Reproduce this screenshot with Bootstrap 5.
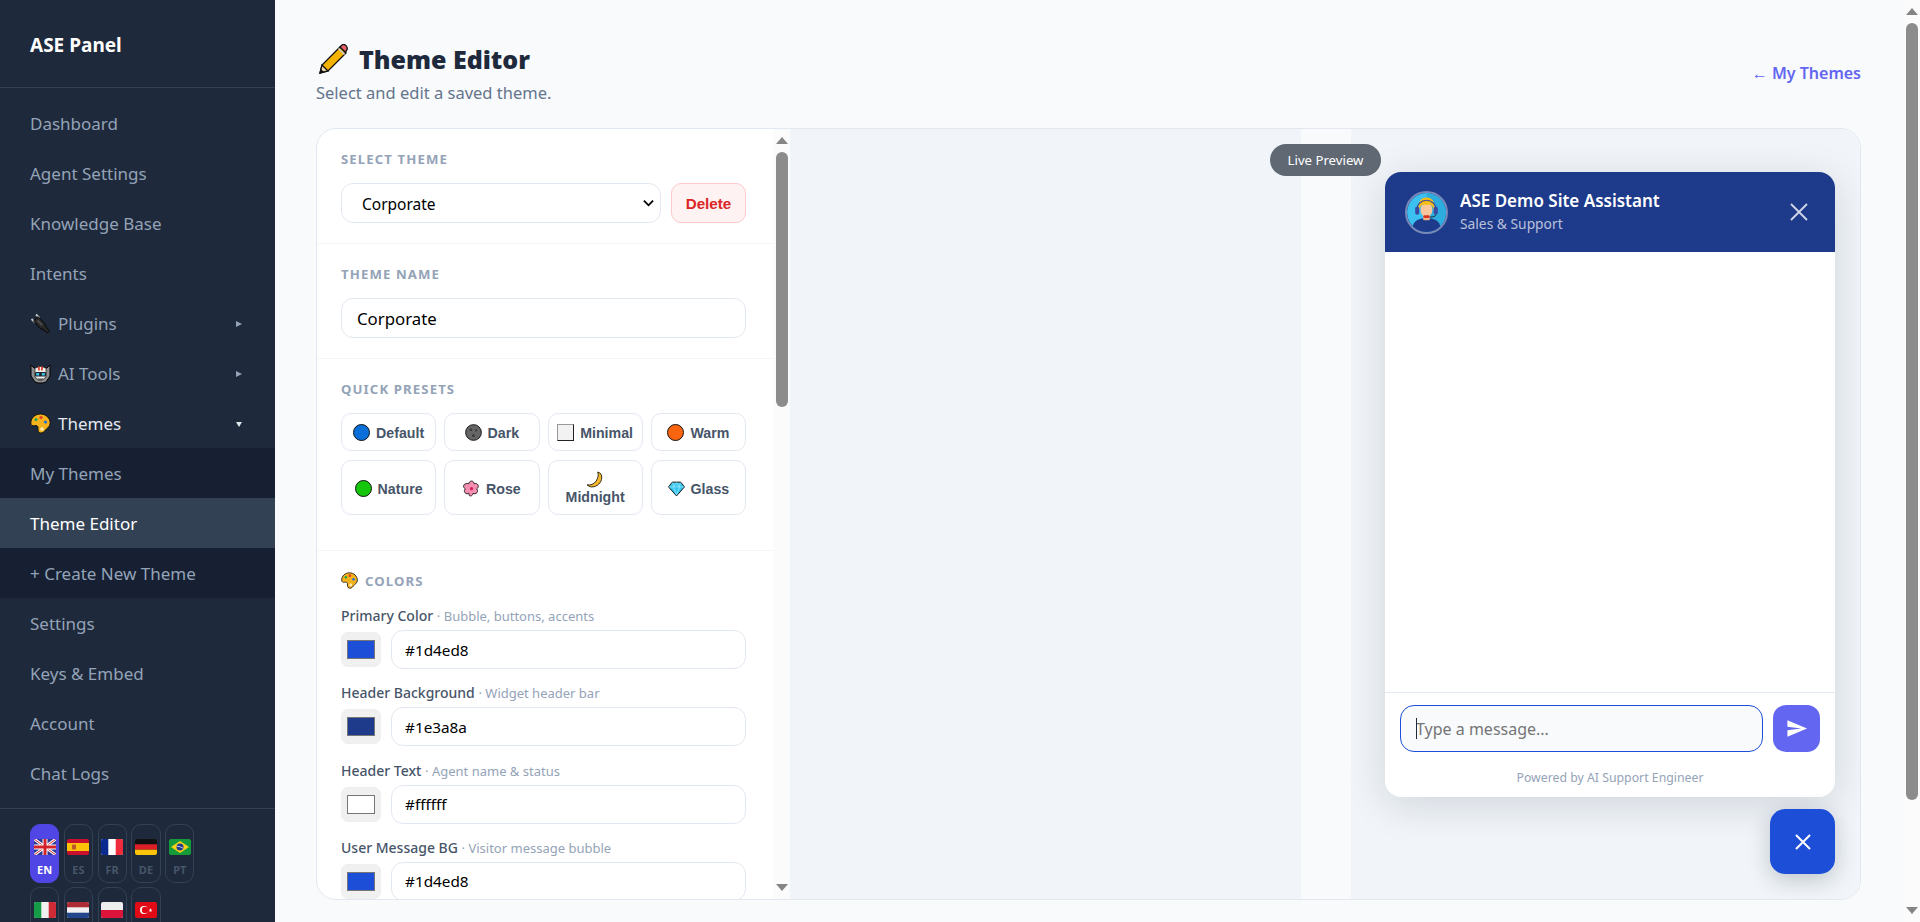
<!DOCTYPE html>
<html lang="en">
<head>
  <meta charset="UTF-8" />
  <meta name="viewport" content="width=device-width, initial-scale=1.0"/>
  <title>Theme Editor - ASE Panel</title>
  <link href="https://cdn.jsdelivr.net/npm/bootstrap@5.3.0/dist/css/bootstrap.min.css" rel="stylesheet"/>
  <style>
    html, body { height: 100%; overflow: hidden; }
    body {
      font-family: "Noto Sans", "Open Sans", sans-serif;
      background: #f8fafc;
      color: #1e293b;
    }

    /* classic scrollbars */
    .scroll-bar { width: 17px; flex: 0 0 17px; padding: 8px 0; background: #fbfbfc; }
    .scroll-up { width: 0; height: 0; border: solid transparent; border-width: 0 6.5px 7px; border-bottom-color: #858585; }
    .scroll-down { width: 0; height: 0; border: solid transparent; border-width: 7px 6.5px 0; border-top-color: #858585; margin-top: auto; }
    .scroll-thumb { width: 12px; margin-top: 8px; background: #8c8c8c; border-radius: 6px; }
    .thumb-page { height: 777px; }
    .thumb-pane { height: 255px; }

    /* sidebar */
    .sidebar { width: 275px; flex: 0 0 275px; background: #1e293b; overflow: hidden; }
    .brand { height: 88px; flex-shrink: 0; padding: 34px 30px 0; font-size: 19px; font-weight: 700; color: #fff; line-height: 22px; border-bottom: 1px solid #334155; }
    .side-nav { flex-shrink: 0; padding: 10px 0; border-bottom: 1px solid #334155; }
    .side-link {
      height: 50px;
      padding: 1px 30px 0;
      font-size: 17px;
      color: #94a3b8;
      text-decoration: none;
    }
    .side-link svg.emoji { width: 21px; height: 21px; margin-right: 7px; }
    .side-link .caret { width: 6px; height: 6px; margin-left: auto; margin-right: 3px; fill: #94a3b8; }
    .side-link.open { color: #e2e8f0; }
    .side-link.open .caret { fill: #e2e8f0; }
    .sub-link { background: #162032; }
    .sub-link.active { background: #334155; color: #fff; }
    .lang-list { flex-shrink: 0; padding: 15px 70px 0 30px; gap: 4px 4.6px; }
    .lang-btn {
      width: 29.2px;
      height: 59px;
      padding-top: 14px;
      border: 1px solid #334155;
      border-radius: 10px;
      font-size: 11px;
      font-weight: 700;
      line-height: 16px;
      color: #475569;
    }
    .lang-btn svg { width: 22px; height: 16px; border-radius: 2px; margin-bottom: 7px; }
    .lang-btn.active { background: #4f46e5; border-color: #4f46e5; color: #fff; }

    /* page */
    .main-area { overflow: hidden; min-width: 0; padding: 41px 42px 0 41px; }
    .page-head { margin-bottom: 23px; }
    .page-title { font-size: 25px; line-height: 36px; font-weight: 900; color: #1e293b; margin: 0; }
    .page-title svg { width: 31px; height: 31px; margin: 0 10px 0 2px; }
    .page-sub { font-size: 16.5px; line-height: 24px; color: #64748b; margin: 4px 0 0; }
    .back-link { font-size: 16px; font-weight: 600; color: #6366f1; text-decoration: none; }

    .editor { height: 772px; background: #fff; border: 1px solid #e2e8f0; border-radius: 20px; overflow: hidden; }
    .pane-form { width: 473px; flex: 0 0 473px; }
    .form-scroll { overflow: hidden; min-width: 0; }
    .form-block { padding: 20px 27px 20px 24px; border-bottom: 1px solid #f1f5f9; }
    .block-title {
      font-size: 13.2px;
      line-height: 20px;
      font-weight: 700;
      letter-spacing: 1.1px;
      text-transform: uppercase;
      color: #94a3b8;
      margin-bottom: 14px;
    }
    .block-title svg { width: 17px; height: 17px; margin-right: 7px; vertical-align: -3px; }
    .colors-title { margin-bottom: 15px; }
    .field, .form-select.field {
      height: 40px;
      border: 1px solid #e2e8f0;
      border-radius: 12px;
      color: #000;
      font-size: 15.5px;
    }
    .theme-select {
      padding: 3px 24px 0 20px;
      background-image: url("data:image/svg+xml,%3csvg xmlns='http://www.w3.org/2000/svg' viewBox='0 0 12 8'%3e%3cpath fill='none' stroke='%23000' stroke-width='2' d='M1 1.500l5 5 5-5'/%3e%3c/svg%3e");
      background-size: 11px 8px;
      background-position: right 6px center;
    }
    .name-input { padding: 0 15px; font-size: 16.8px; }
    .theme-row { gap: 10px; }
    .btn-del {
      width: 75px;
      height: 40px;
      padding: 0;
      background: #fef2f2;
      border: 1px solid #fecaca;
      border-radius: 10px;
      font: 700 15.2px "Liberation Sans", Arial, sans-serif;
      color: #dc2626;
    }
    .preset-grid { display: grid; grid-template-columns: repeat(4, 1fr); gap: 9px 8px; margin-bottom: 15px; }
    .preset {
      padding: 10px 8px 8px;
      background: #fff;
      border: 1px solid #e2e8f0;
      border-radius: 10px;
      font: 700 14.2px/17px "Liberation Sans", Arial, sans-serif;
      color: #475569;
    }
    .preset svg { width: 17px; height: 17px; margin-right: 2px; vertical-align: -3px; }
    .preset .dot { display: inline-block; width: 17px; height: 17px; margin-right: 2px; border: 1px solid #111; border-radius: 50%; vertical-align: -3px; }
    .preset .box { display: inline-block; width: 17px; height: 17px; margin-right: 2px; border: 1px solid #222; border-top-color: #999; border-left-color: #999; background: #f2f2f2; vertical-align: -3px; }
    .colour-row { margin-bottom: 14.3px; }
    .colour-label { font-size: 14px; line-height: 20px; font-weight: 500; color: #475569; margin-bottom: 4px; }
    .colour-label small { font-size: 13px; font-weight: 400; color: #94a3b8; }
    .colour-pick {
      width: 40px;
      height: 35px;
      padding: 7px 5px;
      background: #f0f0f0;
      border: 1px solid #eee;
      border-radius: 7px;
      flex: 0 0 40px;
    }
    .colour-pick::-webkit-color-swatch-wrapper { padding: 0; }
    .colour-pick::-webkit-color-swatch { border: 1px solid #767676; border-radius: 0; }
    .colour-input { height: 39px; padding: 0 13px; font-size: 15.3px; }
    .colour-gap { gap: 10px; }

    /* live preview */
    .pane-preview { background: #f1f5f9; min-width: 0; }
    .band-gap { width: 511px; flex: 0 0 511px; }
    .band { width: 50px; flex: 0 0 50px; background: #f8fafc; }
    .stage { padding: 43px 25px 0 34px; min-width: 0; }
    .live-badge {
      position: absolute;
      top: 15px;
      left: 480px;
      width: 111px;
      height: 32px;
      padding-top: 1px;
      background: #5f6873;
      border-radius: 16px;
      font-size: 13.2px;
      color: #fff;
      z-index: 2;
    }
    .widget { width: 450px; height: 625px; flex-shrink: 0; background: #fff; border-radius: 16px; overflow: hidden; box-shadow: 0 8px 40px rgba(15, 23, 42, .14); }
    .widget-head { height: 80px; padding: 0 26px 0 20px; background: #1e3a8a; color: #fff; }
    .widget-head .avatar { width: 43px; height: 43px; margin-right: 12px; border-radius: 50%; border: 2px solid rgba(255, 255, 255, .4); flex: 0 0 43px; }
    .widget-name { font-size: 17px; line-height: 22px; font-weight: 600; margin-bottom: 2px; }
    .widget-status { font-size: 13.8px; line-height: 20px; color: rgba(255, 255, 255, .7); }
    .widget-head .close-x { width: 20px; height: 20px; margin-left: auto; stroke: rgba(255, 255, 255, .8); }
    .widget-body { min-height: 0; }
    .widget-foot { padding: 12px 15px 0; border-top: 1px solid #e2e8f0; height: 105px; }
    .msg-input {
      width: 363px;
      height: 47px;
      padding: 0 15px;
      background: #f8fafc;
      border: 1px solid #1d4ed8;
      border-radius: 14px;
      font-size: 16px;
    }
    .msg-input::placeholder { color: #757575; }
    .msg-wrap { position: relative; }
    .msg-caret { position: absolute; left: 16px; top: 13px; width: 1px; height: 21px; background: #1e293b; }
    .send-btn { width: 47px; height: 47px; padding: 0; background: #6366f1; border: 0; border-radius: 13px; }
    .send-btn svg { width: 23px; height: 23px; fill: #fff; }
    .powered { margin-top: 17px; font-size: 12.3px; line-height: 18px; color: #94a3b8; text-align: center; }
    .fab { width: 65px; height: 65px; flex-shrink: 0; margin-top: 12px; padding: 0; background: #1d4ed8; border: 0; border-radius: 15px; box-shadow: 0 6px 22px rgba(15, 23, 42, .22); }
    .fab svg { width: 18px; height: 18px; stroke: #fff; }
  </style>
</head>
<body class="d-flex">
  <svg width="0" height="0" class="position-absolute">
    <defs>
      <symbol id="e-plug" viewBox="0 0 21 21">
        <path d="M1.500 6 5 9.500M6 1.500 9.500 5" stroke="#c8c8c8" stroke-width="1.800"/>
        <path d="M3.500 8 8 3.500l7 7 1 3 3.500 4.500-2 2-4.500-3.500-3-1z" fill="#262626" stroke="#000" stroke-width=".8"/>
        <path d="M6.500 8 8 6.500l5 5-1.500 1.500z" fill="#4a4a4a"/>
      </symbol>
      <symbol id="e-robot" viewBox="0 0 21 21">
        <path d="M1 2l3 3h13l3-3v11l-4 6-3 1H8l-3-1-4-6z" fill="#8c8c8c" stroke="#000"/>
        <path d="M5 5q5.500-3 11 0v9q-5.500 6-11 0z" fill="#f0f0f0" stroke="#000" stroke-width=".6"/>
        <rect x="8" y="3.500" width="1.800" height="4" fill="#d8452e"/>
        <rect x="11" y="3.500" width="1.800" height="4" fill="#d8452e"/>
        <rect x="5" y="9" width="11" height="4.500" rx="1" fill="#222"/>
        <rect x="6.200" y="10" width="3" height="2.500" fill="#38c6f0"/>
        <rect x="11.800" y="10" width="3" height="2.500" fill="#38c6f0"/>
        <rect x="8" y="15.500" width="5" height="2" fill="#555"/>
      </symbol>
      <symbol id="e-palette" viewBox="0 0 21 21">
        <path d="M10.500 1C5 1 .8 5 .8 10c0 2.500 2 3.200 3.700 2.700 2-.6 3.600.2 3.500 2-.1 1.500-.3 5.300 2.800 5.300 2.300 0 3-1 4.200-2.500 1.400-1.700 5.200-3.500 5.200-7.500 0-5-4.500-9-9.700-9z" fill="#f5b21c" stroke="#111"/>
        <circle cx="6" cy="6.500" r="1.500" fill="#1ea34a"/>
        <circle cx="11" cy="4.500" r="1.600" fill="#e23b2e"/>
        <circle cx="15.500" cy="9" r="1.600" fill="#1f6fe0"/>
        <circle cx="12" cy="16" r="1.800" fill="#fbeeb9"/>
      </symbol>
      <symbol id="e-pencil" viewBox="0 0 31 31">
        <path d="M2 29l2-8L22 3l6 6L10 27z" fill="#f5b301" stroke="#111" stroke-width="1.300"/>
        <path d="M22 3l2-2c1-1 3-.5 4 .7s1.800 3 .8 4L27.500 8.500z" fill="#e8606a" stroke="#111" stroke-width="1.300"/>
        <path d="M20.500 4.500l6 6" stroke="#ccc" stroke-width="1.600"/>
        <path d="M2 29l2-8 6 6z" fill="#f3d9b1" stroke="#111" stroke-width="1.300"/>
        <path d="M2 29l1-4 3 3z" fill="#111"/>
      </symbol>
      <symbol id="e-moon" viewBox="0 0 16 16">
        <path d="M11 1c3 .5 4 3 3.800 5.500C14.500 11 10.500 15 5.500 15 3.500 15 2 14 1 13c3 .7 6.500-.5 8.500-3.500C11.500 6.500 12 3.500 11 1z" fill="#f5b82e" stroke="#111" stroke-width=".8"/>
      </symbol>
      <symbol id="e-rose" viewBox="0 0 16 16">
        <path d="M8 1c1.500 0 2.500 1.300 2.500 2.500 1.300-.6 3-.2 3.700 1.300.7 1.500-.2 3-1.400 3.500 1 .9 1.300 2.500.3 3.700-1 1.200-2.600 1.200-3.700.5 0 1.300-1 2.500-2.400 2.500S5.600 13.800 5.600 12.500c-1.100.7-2.700.7-3.700-.5-1-1.200-.7-2.800.3-3.700C1 7.800.1 6.300.8 4.800S4.200 2.900 5.500 3.500C5.500 2.300 6.500 1 8 1z" fill="#f48fb1" stroke="#111" stroke-width=".8"/>
        <circle cx="8" cy="8.200" r="1.500" fill="#d81b60"/>
      </symbol>
      <symbol id="e-gem" viewBox="0 0 16 16">
        <path d="M4 2h8l3.500 4.500L8 15 .5 6.500z" fill="#38c6f0" stroke="#111" stroke-width=".9"/>
        <path d="M1 6.500h14M5 6.500 8 14l3-7.500M4.500 2.500 5.500 6.500 8 2.500l2.500 4 1-4" fill="none" stroke="#a6ecfb" stroke-width=".6"/>
      </symbol>
      <symbol id="e-moonball" viewBox="0 0 16 16">
        <circle cx="8" cy="8" r="7.400" fill="#666" stroke="#111" stroke-width=".9"/>
        <circle cx="5.500" cy="5.500" r="1.300" fill="#3c3c3c"/>
        <circle cx="10.500" cy="6" r="1" fill="#3c3c3c"/>
        <circle cx="8" cy="11" r="1.400" fill="#3c3c3c"/>
      </symbol>
    </defs>
  </svg>

  <aside class="sidebar d-flex flex-column">
    <div class="brand">ASE Panel</div>
    <nav class="side-nav d-flex flex-column" id="sideNav"></nav>
    <div class="lang-list d-flex flex-wrap" id="langList"></div>
  </aside>

  <main class="main-area flex-grow-1">
    <div class="page-head d-flex justify-content-between align-items-center">
      <div>
        <h1 class="page-title d-flex align-items-center"><svg><use href="#e-pencil"/></svg>Theme Editor</h1>
        <p class="page-sub">Select and edit a saved theme.</p>
      </div>
      <a href="#" class="back-link">← My Themes</a>
    </div>

    <div class="editor d-flex">
      <section class="pane-form d-flex">
        <div class="form-scroll flex-grow-1">
          <div class="form-block">
            <div class="block-title">Select theme</div>
            <div class="theme-row d-flex">
              <select class="form-select field theme-select flex-grow-1"><option>Corporate</option></select>
              <button class="btn-del flex-shrink-0" type="button">Delete</button>
            </div>
          </div>
          <div class="form-block">
            <div class="block-title">Theme name</div>
            <input class="form-control field name-input" value="Corporate">
          </div>
          <div class="form-block">
            <div class="block-title">Quick presets</div>
            <div class="preset-grid" id="presetGrid"></div>
          </div>
          <div class="form-block border-0">
            <div class="block-title colors-title"><svg><use href="#e-palette"/></svg>Colors</div>
            <div id="colourRows"></div>
          </div>
        </div>
        <div class="scroll-bar d-flex flex-column align-items-center">
          <span class="scroll-up"></span>
          <span class="scroll-thumb thumb-pane"></span>
          <span class="scroll-down"></span>
        </div>
      </section>

      <section class="pane-preview flex-grow-1 d-flex position-relative">
        <div class="live-badge d-flex align-items-center justify-content-center">Live Preview</div>
        <div class="band-gap"></div>
        <div class="band"></div>
        <div class="stage flex-grow-1 d-flex flex-column align-items-end">
          <div class="widget d-flex flex-column">
            <div class="widget-head d-flex align-items-center flex-shrink-0">
              <svg class="avatar" viewBox="0 0 43 43">
                <circle cx="21.500" cy="21.500" r="21.500" fill="#3cc0f0"/>
                <path d="M21.500 0a21.500 21.500 0 0 1 0 43z" fill="#2cacdf"/>
                <path d="M6 38c1-7 6-9 10-10h11c4 1 9 3 10 10a21.500 21.500 0 0 1-31 0z" fill="#1e3a8a"/>
                <rect x="18" y="23" width="7" height="7" fill="#f2b488"/>
                <ellipse cx="21.500" cy="18.500" rx="6.500" ry="8" fill="#f8c69c"/>
                <path d="M13 20C11 9 16 5 21.500 5S32 9 30 20c-.5-3-2-6-4-7h-9c-2 1-3.500 4-4 7z" fill="#f7bd14"/>
                <path d="M11 20C10 4 33 4 32 20" fill="none" stroke="#3b4aa0" stroke-width="1.300"/>
                <rect x="9" y="15" width="4.500" height="9" rx="2.200" fill="#3b4aa0"/>
                <rect x="29.500" y="15" width="4.500" height="9" rx="2.200" fill="#3b4aa0"/>
                <path d="M32 24c-1 2-3 2.500-7 2.500" fill="none" stroke="#222" stroke-width="1"/>
                <rect x="18" y="24.500" width="7" height="3" rx="1.500" fill="#d7301f"/>
              </svg>
              <div>
                <div class="widget-name">ASE Demo Site Assistant</div>
                <div class="widget-status">Sales &amp; Support</div>
              </div>
              <svg class="close-x" viewBox="0 0 20 20" fill="none" stroke-width="1.800"><path d="M2 2l16 16M18 2 2 18"/></svg>
            </div>
            <div class="widget-body flex-grow-1"></div>
            <div class="widget-foot flex-shrink-0">
              <div class="d-flex gap-2 justify-content-between">
                <div class="msg-wrap">
                  <input class="form-control msg-input" placeholder="Type a message...">
                  <span class="msg-caret"></span>
                </div>
                <button class="send-btn d-flex align-items-center justify-content-center" type="button">
                  <svg viewBox="0 0 24 24"><path d="M2.500 20.500 23 12 2.500 3.500v6.600L17 12 2.500 13.900z"/></svg>
                </button>
              </div>
              <div class="powered">Powered by AI Support Engineer</div>
            </div>
          </div>
          <button class="fab d-flex align-items-center justify-content-center" type="button">
            <svg viewBox="0 0 18 18" fill="none" stroke-width="2"><path d="M2 2l14 14M16 2 2 16"/></svg>
          </button>
        </div>
      </section>
    </div>
  </main>

  <div class="scroll-bar d-flex flex-column align-items-center">
    <span class="scroll-up"></span>
    <span class="scroll-thumb thumb-page"></span>
    <span class="scroll-down"></span>
  </div>

  <script src="https://cdn.jsdelivr.net/npm/bootstrap@5.3.0/dist/js/bootstrap.bundle.min.js"></script>
  <script>
    const caretRight = '<svg class="caret" viewBox="0 0 6 6"><path d="M0 0l6 3-6 3z"/></svg>';
    const caretDown = '<svg class="caret" viewBox="0 0 6 6"><path d="M0 1h6L3 6z"/></svg>';

    const navItems = [
      { text: "Dashboard" },
      { text: "Agent Settings" },
      { text: "Knowledge Base" },
      { text: "Intents" },
      { text: "Plugins", icon: "e-plug", caret: caretRight },
      { text: "AI Tools", icon: "e-robot", caret: caretRight },
      { text: "Themes", icon: "e-palette", caret: caretDown, cls: "open" },
      { text: "My Themes", cls: "sub-link" },
      { text: "Theme Editor", cls: "sub-link active" },
      { text: "+ Create New Theme", cls: "sub-link" },
      { text: "Settings" },
      { text: "Keys & Embed" },
      { text: "Account" },
      { text: "Chat Logs" }
    ];

    document.getElementById("sideNav").innerHTML = navItems.map(item => `
      <a href="#" class="side-link d-flex align-items-center ${item.cls || ''}">
        ${item.icon ? `<svg class="emoji"><use href="#${item.icon}"/></svg>` : ''}
        <span>${item.text.replace('&', '&amp;')}</span>
        ${item.caret || ''}
      </a>`).join('');

    const flags = {
      EN: '<rect width="22" height="16" fill="#2b3990"/><path d="M0 0l22 16M22 0 0 16" stroke="#fff" stroke-width="3"/><path d="M0 0l22 16M22 0 0 16" stroke="#d2232a" stroke-width="1"/><path d="M11 0v16M0 8h22" stroke="#fff" stroke-width="5"/><path d="M11 0v16M0 8h22" stroke="#d2232a" stroke-width="3"/>',
      ES: '<rect width="22" height="16" fill="#c8102e"/><rect y="4" width="22" height="8" fill="#fcc30b"/><rect x="5" y="5.500" width="4" height="5" rx="1" fill="#c0562b"/>',
      FR: '<rect width="22" height="16" fill="#fff"/><rect width="7.300" height="16" fill="#0b2a8f"/><rect x="14.700" width="7.300" height="16" fill="#ef2b3c"/>',
      DE: '<rect width="22" height="16" fill="#111"/><rect y="5.300" width="22" height="5.400" fill="#dd1f26"/><rect y="10.700" width="22" height="5.300" fill="#fcc30b"/>',
      PT: '<rect width="22" height="16" fill="#169b3a"/><path d="M11 2 20 8 11 14 2 8z" fill="#fcd116"/><circle cx="11" cy="8" r="3.500" fill="#1e3a8a"/><path d="M7.800 7.200q3.500 0 6.200 2" stroke="#fff" stroke-width=".7" fill="none"/>',
      IT: '<rect width="22" height="16" fill="#f1f1f1"/><rect width="7.300" height="16" fill="#169b46"/><rect x="14.700" width="7.300" height="16" fill="#ce2b37"/>',
      NL: '<rect width="22" height="16" fill="#f1f1f1"/><rect width="22" height="5.300" fill="#ad2b34"/><rect y="10.700" width="22" height="5.300" fill="#21468b"/>',
      PL: '<rect width="22" height="16" fill="#eeeeee"/><rect y="8" width="22" height="8" fill="#dc143c"/>',
      TR: '<rect width="22" height="16" fill="#e30a17"/><circle cx="9" cy="8" r="4" fill="#fff"/><circle cx="10" cy="8" r="3.200" fill="#e30a17"/><path d="M15.500 6.300l.5 1.300 1.300.1-1 .9.300 1.300-1.100-.7-1.100.7.300-1.300-1-.9 1.300-.1z" fill="#fff"/>'
    };

    // the second row of flags runs off the window, its codes are never seen
    document.getElementById("langList").innerHTML = Object.keys(flags).map((code, i) => `
      <div class="lang-btn d-flex flex-column align-items-center ${i === 0 ? 'active' : ''}" title="${code}">
        <svg viewBox="0 0 22 16">${flags[code]}</svg>${i < 5 ? code : ''}
      </div>`).join('');

    const presets = [
      ['<span class="dot" style="background:#0a6fd8"></span>', "Default"],
      ['<svg><use href="#e-moonball"/></svg>', "Dark"],
      ['<span class="box"></span>', "Minimal"],
      ['<span class="dot" style="background:#f9650f"></span>', "Warm"],
      ['<span class="dot" style="background:#16c60c"></span>', "Nature"],
      ['<svg><use href="#e-rose"/></svg>', "Rose"],
      ['<svg><use href="#e-moon"/></svg>', "Midnight"],
      ['<svg><use href="#e-gem"/></svg>', "Glass"]
    ];

    document.getElementById("presetGrid").innerHTML = presets.map(p =>
      `<button class="preset" type="button">${p[0]} ${p[1]}</button>`).join('');

    const colours = [
      { label: "Primary Color", hint: "Bubble, buttons, accents", value: "#1d4ed8" },
      { label: "Header Background", hint: "Widget header bar", value: "#1e3a8a" },
      { label: "Header Text", hint: "Agent name &amp; status", value: "#ffffff" },
      { label: "User Message BG", hint: "Visitor message bubble", value: "#1d4ed8" }
    ];

    document.getElementById("colourRows").innerHTML = colours.map(c => `
      <div class="colour-row">
        <div class="colour-label">${c.label} <small>· ${c.hint}</small></div>
        <div class="d-flex align-items-center colour-gap">
          <input type="color" class="colour-pick" value="${c.value}">
          <input class="form-control field colour-input" value="${c.value}">
        </div>
      </div>`).join('');
  </script>
</body>
</html>
